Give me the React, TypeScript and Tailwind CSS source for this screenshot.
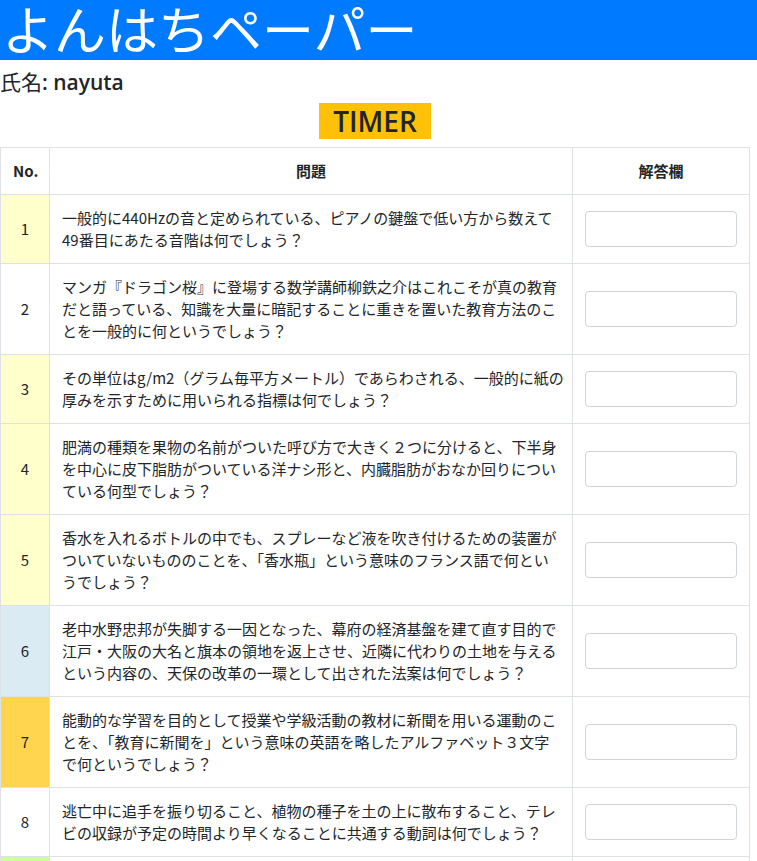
const font = '"Open Sans", "Noto Sans CJK JP", sans-serif'
const jpFont = '"Noto Sans CJK JP", sans-serif'

interface Question {
  no: number
  lines: string[]
  color: string
}

const questions: Question[] = [
  {
    no: 1,
    color: 'bg-[#ffffcc]',
    lines: ['一般的に440Hzの音と定められている、ピアノの鍵盤で低い方から数えて', '49番目にあたる音階は何でしょう？'],
  },
  {
    no: 2,
    color: 'bg-white',
    lines: [
      'マンガ『ドラゴン桜』に登場する数学講師柳鉄之介はこれこそが真の教育',
      'だと語っている、知識を大量に暗記することに重きを置いた教育方法のこ',
      'とを一般的に何というでしょう？',
    ],
  },
  {
    no: 3,
    color: 'bg-[#ffffcc]',
    lines: ['その単位はg/m2（グラム毎平方メートル）であらわされる、一般的に紙の', '厚みを示すために用いられる指標は何でしょう？'],
  },
  {
    no: 4,
    color: 'bg-[#ffffcc]',
    lines: [
      '肥満の種類を果物の名前がついた呼び方で大きく２つに分けると、下半身',
      'を中心に皮下脂肪がついている洋ナシ形と、内臓脂肪がおなか回りについ',
      'ている何型でしょう？',
    ],
  },
  {
    no: 5,
    color: 'bg-[#ffffcc]',
    lines: [
      '香水を入れるボトルの中でも、スプレーなど液を吹き付けるための装置が',
      'ついていないもののことを、「香水瓶」という意味のフランス語で何とい',
      'うでしょう？',
    ],
  },
  {
    no: 6,
    color: 'bg-[#daebf4]',
    lines: [
      '老中水野忠邦が失脚する一因となった、幕府の経済基盤を建て直す目的で',
      '江戸・大阪の大名と旗本の領地を返上させ、近隣に代わりの土地を与える',
      'という内容の、天保の改革の一環として出された法案は何でしょう？',
    ],
  },
  {
    no: 7,
    color: 'bg-[#ffd54f]',
    lines: [
      '能動的な学習を目的として授業や学級活動の教材に新聞を用いる運動のこ',
      'とを、「教育に新聞を」という意味の英語を略したアルファベット３文字',
      'で何というでしょう？',
    ],
  },
  {
    no: 8,
    color: 'bg-white',
    lines: [
      '逃亡中に追手を振り切ること、植物の種子を土の上に散布すること、テレ',
      'ビの収録が予定の時間より早くなることに共通する動詞は何でしょう？',
    ],
  },
  { no: 9, color: 'bg-[#ccff99]', lines: ['次の問題'] },
]

export default function App() {
  return (
    <div className="bg-white text-[#212529]" style={{ fontFamily: font }}>
      <header className="bg-[#007bff] h-[60px] overflow-hidden">
        <h1 className="text-white text-[52px] leading-[60px] pl-[2px] font-normal">よんはちペーパー</h1>
      </header>

      <h5 className="text-[21px] leading-[24px] font-semibold mt-[10px]">
        <span className="font-normal">氏名</span>: nayuta
      </h5>

      <div className="flex justify-center w-[750px] mt-[9px] mb-[8px]">
        <span className="bg-[#ffc107] text-[28px] leading-[36px] px-[14px] font-semibold">TIMER</span>
      </div>

      <table className="w-[750px] table-fixed border-collapse text-[15px] leading-[22px]" style={{ fontFamily: jpFont }}>
        <colgroup>
          <col className="w-[49px]" />
          <col />
          <col className="w-[177px]" />
        </colgroup>
        <thead>
          <tr>
            <th className="border border-[#dee2e6] p-3 font-bold">No.</th>
            <th className="border border-[#dee2e6] p-3 font-bold">問題</th>
            <th className="border border-[#dee2e6] p-3 font-bold">解答欄</th>
          </tr>
        </thead>
        <tbody>
          {questions.map((q) => (
            <tr key={q.no}>
              <td className={`${q.color} border border-[#dee2e6] p-3 text-center`}>{q.no}</td>
              <td className="border border-[#dee2e6] p-3">
                {q.lines.map((line, i) => (
                  <div key={i} className="whitespace-nowrap">
                    {line}
                  </div>
                ))}
              </td>
              <td className="border border-[#dee2e6] p-3 align-middle">
                <input
                  type="text"
                  className="block w-full h-[36px] border border-[#ced4da] rounded-[4px] px-3 outline-none"
                />
              </td>
            </tr>
          ))}
        </tbody>
      </table>
    </div>
  )
}
